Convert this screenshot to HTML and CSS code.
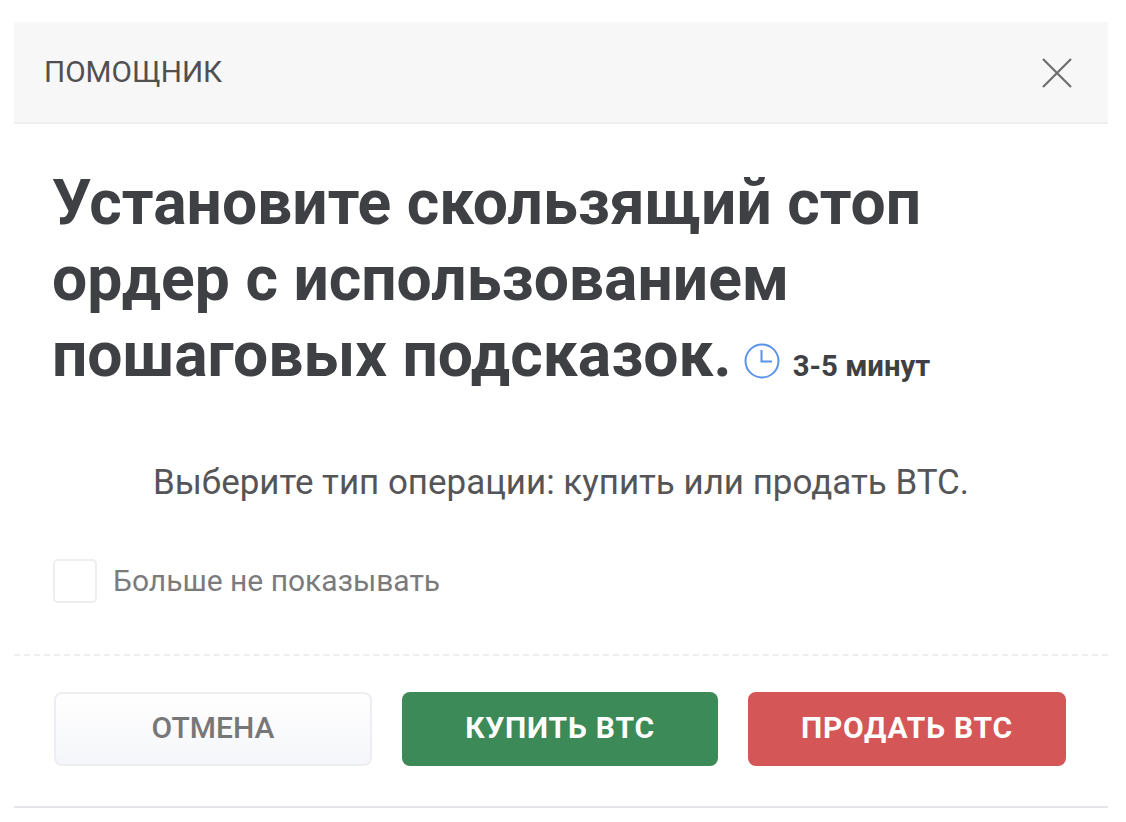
FILE: index.html
```html
<!DOCTYPE html>
<html lang="ru">
<head>
<meta charset="utf-8">
<title>Помощник</title>
<link rel="stylesheet" href="styles.css">
</head>
<body>
<div class="modal">
  <header class="head">
    <span class="head-title">ПОМОЩНИК</span>
    <svg class="close" width="32" height="32" viewBox="0 0 32 32"><path d="M2 2 L30 30 M30 2 L2 30" stroke="#6e6e6e" stroke-width="2.2" fill="none"/></svg>
  </header>
  <main class="content">
    <h1 class="title">Установите скользящий стоп ордер с использованием пошаговых подсказок.<svg class="clock" width="36" height="36" viewBox="0 0 36 36"><circle cx="18" cy="18" r="16.5" fill="none" stroke="#5b93ea" stroke-width="2"/><path d="M17.5 7 V18.5 H28" fill="none" stroke="#5b93ea" stroke-width="2"/></svg><span class="time">3-5 минут</span></h1>
    <p class="text">Выберите тип операции: купить или продать BTC.</p>
    <label class="check"><span class="box"></span><span class="check-label">Больше не показывать</span></label>
  </main>
  <footer class="foot">
    <button class="btn cancel"><span class="btn-text">ОТМЕНА</span></button>
    <button class="btn buy"><span class="btn-text">КУПИТЬ BTC</span></button>
    <button class="btn sell"><span class="btn-text">ПРОДАТЬ BTC</span></button>
  </footer>
</div>
</body>
</html>
```
FILE: styles.css
```css
* { box-sizing: border-box; }
html, body { margin: 0; background: #fff; }
body { padding: 22px 18px 0 14px; font-family: Roboto, "Liberation Sans", sans-serif; color: #3a3a3c; height: 822px; overflow: hidden; }
.modal { height: 786px; border-bottom: 2px solid #e6e6ea; display: flex; flex-direction: column; }
.head { height: 102px; background: #f7f7f7; border-bottom: 2px solid #eeeeee; display: flex; align-items: center; justify-content: space-between; padding: 2px 35px 0 30px; }
.head-title { font-size: 29.7px; color: #505052; padding-bottom: 4px; }
.close { display: block; }
.content { padding: 0 38px; flex: 1; }
.title { margin: 41px 0 0; font-size: 62.4px; line-height: 76px; font-weight: 700; color: #3f4044; }
.clock { margin: 0 13px 0 12px; vertical-align: -3px; }
.time { font-size: 29.3px; font-weight: 700; line-height: 1; }
.text { margin: 68px 0 0; text-align: center; font-size: 34.95px; line-height: 44px; color: #555557; }
.check { margin-top: 54px; display: flex; align-items: center; gap: 16px; padding-left: 1px; }
.box { width: 44px; height: 44px; border: 2px solid #eeeeee; border-radius: 5px; background: #fff; }
.check-label { font-size: 30px; color: #7b7b7d; padding-bottom: 2px; }
.foot { border-top: 2px dashed #eeeeee; display: grid; grid-template-columns: 318px 316px 318px; gap: 30px; padding: 36px 42px 40px 40px; }
.btn { height: 74px; padding: 0 0 4px; border-radius: 8px; border: none; font-family: inherit; font-size: 30px; font-weight: 700; letter-spacing: 0.8px; color: #fff; }
.cancel { background: linear-gradient(#ffffff, #f5f6f9); border: 2px solid #eeeef2; padding-bottom: 4px; color: #77777a; font-weight: 500; letter-spacing: 0; }
.buy { background: #3b8a57; }
.sell { background: #d45656; }
```
